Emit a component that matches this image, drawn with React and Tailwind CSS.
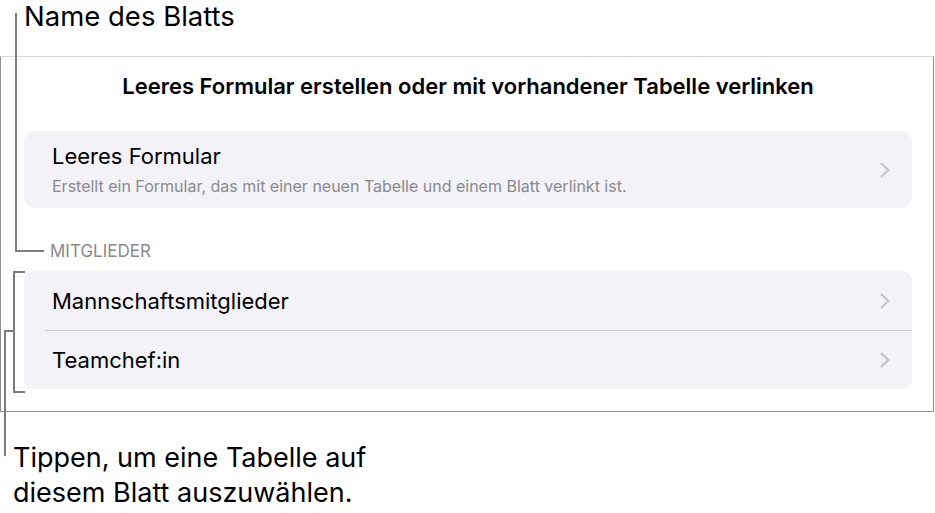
function Chevron() {
    return (
        <svg width="10" height="16" viewBox="0 0 10 16" fill="none" className="shrink-0">
            <polyline
                points="1.5,1.5 8.3,8 1.5,14.5"
                stroke="#c4c4c7"
                strokeWidth="2"
                strokeLinecap="round"
                strokeLinejoin="round"
            />
        </svg>
    );
}

function Row({ title, sub }) {
    return (
        <div className="flex items-center justify-between pl-[28px] pr-[22px]">
            <div className="flex flex-col">
                <span className="text-[22px] leading-[26px] text-black">{title}</span>
                {sub && (
                    <span className="mt-[7px] text-[16px] leading-[20px] text-[#8a8a8e]">{sub}</span>
                )}
            </div>
            <Chevron />
        </div>
    );
}

export default function App() {
    return (
        <div className="relative h-[513px] w-[935px] overflow-hidden bg-white font-['Inter',sans-serif] text-black">
            {/* callout label oben */}
            <div className="flex h-[56px] items-start pl-[24px]">
                <span className="text-[27.5px] leading-[32px]">Name des Blatts</span>
            </div>

            {/* Blatt */}
            <div className="mr-[1px] h-[356px] border border-t-[#d6d6d6] border-l-[#8e8e8e] border-r-[#8e8e8e] border-b-[#8e8e8e] pl-[23px] pr-[21px]">
                <h1 className="pt-[15px] text-center text-[22px] font-semibold leading-[28px]">
                    Leeres Formular erstellen oder mit vorhandener Tabelle verlinken
                </h1>

                <div className="mt-[31px] flex h-[77px] flex-col justify-center rounded-[10px] bg-[#f2f2f7]">
                    <Row
                        title="Leeres Formular"
                        sub="Erstellt ein Formular, das mit einer neuen Tabelle und einem Blatt verlinkt ist."
                    />
                </div>

                <div className="mt-[33px] pl-[26px] text-[17px] leading-[20px] text-[#8a8a8e]">
                    MITGLIEDER
                </div>

                <div className="mt-[10px] overflow-hidden rounded-[10px] bg-[#f2f2f7]">
                    <div className="flex h-[59px] flex-col justify-center">
                        <Row title="Mannschaftsmitglieder" />
                    </div>
                    <div className="ml-[21px] h-px bg-[#c8c8cc]" />
                    <div className="flex h-[58px] flex-col justify-center">
                        <Row title="Teamchef:in" />
                    </div>
                </div>
            </div>

            {/* callout label unten */}
            <div className="pl-[13px] pt-[28px] text-[27px] leading-[35px]">
                Tippen, um eine Tabelle auf
                <br />
                diesem Blatt auszuwählen.
            </div>

            {/* Hinweislinien */}
            <div className="absolute left-[15px] top-[13px] h-[239px] w-[2px] bg-[#7d7d7d]" />
            <div className="absolute left-[15px] top-[250px] h-[2px] w-[29px] bg-[#7d7d7d]" />

            <div className="absolute left-[13px] top-[271px] h-[122px] w-[2px] bg-[#7d7d7d]" />
            <div className="absolute left-[13px] top-[271px] h-[2px] w-[12px] bg-[#7d7d7d]" />
            <div className="absolute left-[13px] top-[391px] h-[2px] w-[12px] bg-[#7d7d7d]" />
            <div className="absolute left-[4px] top-[330px] h-[2px] w-[10px] bg-[#7d7d7d]" />
            <div className="absolute left-[4px] top-[330px] h-[126px] w-[2px] bg-[#7d7d7d]" />
        </div>
    );
}
